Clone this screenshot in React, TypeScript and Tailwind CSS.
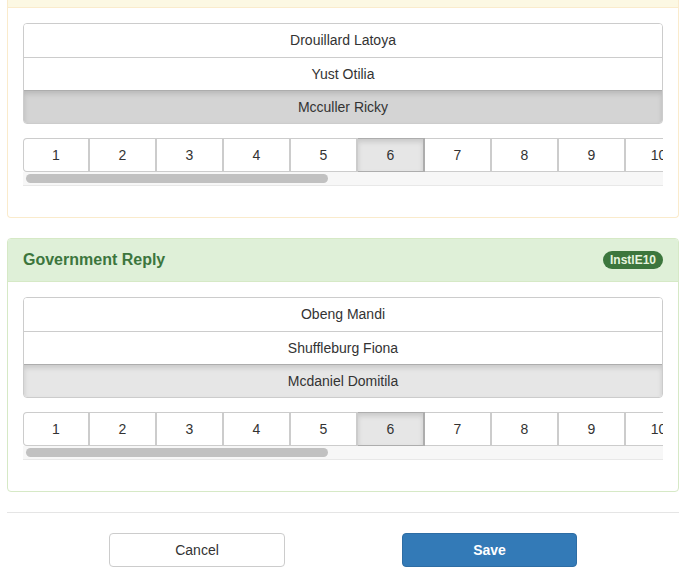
const pages = [1, 2, 3, 4, 5, 6, 7, 8, 9, 10, 11, 12];

interface PickerProps {
  names: string[];
  selectedBg: string;
}

const Picker = ({ names, selectedBg }: PickerProps) => (
  <div>
    <div className="flex flex-col rounded-[4px] border border-[#cccccc] overflow-hidden">
      {names.map((n, i) => {
        const last = i === names.length - 1;
        return (
          <div
            key={n}
            className={`h-[33px] flex items-center justify-center text-[14px] text-[#333333] ${
              i > 0 ? 'border-t border-[#cccccc]' : ''
            } ${last ? `${selectedBg} border-t-[#adadad] shadow-[inset_0_3px_5px_rgba(0,0,0,0.125)]` : 'bg-white'}`}
          >
            {n}
          </div>
        );
      })}
    </div>

    <div className="mt-[14px] overflow-hidden">
      <div className="flex w-max">
        {pages.map((p, i) => (
          <div
            key={p}
            className={`w-[67px] h-[34px] flex items-center justify-center text-[14px] text-[#333333] border-y border-r-2 ${
              i === 0 ? 'border-l rounded-l-[4px]' : ''
            } ${
              p === 6
                ? 'bg-[#e6e6e6] border-[#adadad] shadow-[inset_0_3px_5px_rgba(0,0,0,0.125)]'
                : 'bg-white border-[#cccccc]'
            }`}
          >
            {p}
          </div>
        ))}
      </div>
      <div className="h-[14px] bg-[#f7f7f7] border-b border-[#e8e8e8] pt-[2px] pl-[3px]">
        <div className="w-[302px] h-[9px] rounded-full bg-[#c1c1c1]" />
      </div>
    </div>
  </div>
);

export default function App() {
  return (
    <div
      className="w-[694px] h-[577px] overflow-hidden bg-white"
      style={{ fontFamily: '"Liberation Sans", Arial, sans-serif' }}
    >
      <div className="ml-[7px] w-[672px]">
        <div className="border border-t-0 border-[#faebcc] rounded-b-[4px]">
          <div className="h-[8px] bg-[#fcf8e3] border-b border-[#faebcc]" />
          <div className="px-[15px] pt-[15px] pb-[31px]">
            <Picker
              names={['Drouillard Latoya', 'Yust Otilia', 'Mcculler Ricky']}
              selectedBg="bg-[#d4d4d4]"
            />
          </div>
        </div>

        <div className="mt-[20px] border border-[#d6e9c6] rounded-[4px] overflow-hidden">
          <div className="h-[43px] bg-[#dff0d8] border-b border-[#d6e9c6] px-[15px] flex items-center justify-between">
            <span className="text-[16px] font-bold text-[#3c763d]">Government Reply</span>
            <span className="h-[18px] px-[7px] rounded-full bg-[#3c763d] text-[#e6f4df] text-[12px] font-bold flex items-center">
              InstlE10
            </span>
          </div>
          <div className="px-[15px] pt-[15px] pb-[31px]">
            <Picker
              names={['Obeng Mandi', 'Shuffleburg Fiona', 'Mcdaniel Domitila']}
              selectedBg="bg-[#e6e6e6]"
            />
          </div>
        </div>

        <div className="mt-[20px] border-t border-[#e5e5e5] pt-[20px] flex">
          <button className="ml-[102px] w-[176px] h-[34px] rounded-[4px] border border-[#cccccc] bg-white text-[14px] text-[#333333]">
            Cancel
          </button>
          <button className="ml-[117px] w-[175px] h-[34px] rounded-[4px] border border-[#2e6da4] bg-[#337ab7] text-[14px] font-bold text-white">
            Save
          </button>
        </div>
      </div>
    </div>
  );
}
